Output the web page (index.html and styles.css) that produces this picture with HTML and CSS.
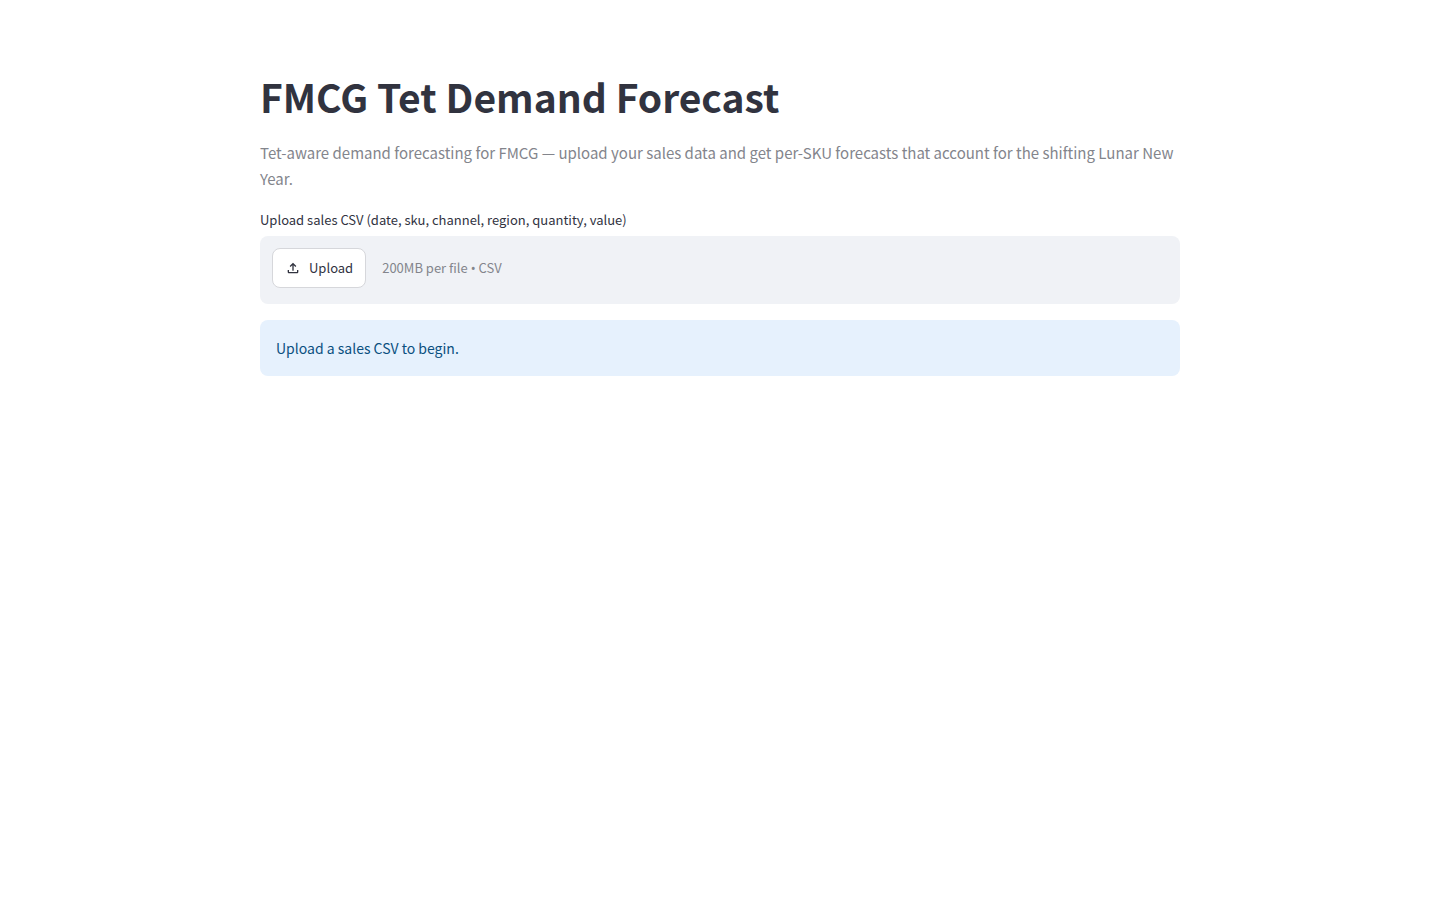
FILE: index.html
```html
<!DOCTYPE html>
<html lang="en">
<head>
  <meta charset="UTF-8">
  <meta name="viewport" content="width=device-width, initial-scale=1.0">
  <title>FMCG Tet Demand Forecast</title>
  <link rel="stylesheet" href="styles.css">
</head>
<body>
  <main class="container">
    <h1>FMCG Tet Demand Forecast</h1>
    <p class="caption">Tet-aware demand forecasting for FMCG — upload your sales data and get per-SKU forecasts that account for the shifting Lunar New Year.</p>
    <!-- File uploader -->
    <div class="uploader">
      <label class="uploader-label" for="salesFile">Upload sales CSV (date, sku, channel, region, quantity, value)</label>
      <div class="dropzone">
        <input type="file" id="salesFile" accept=".csv" hidden>
        <button type="button" class="upload-btn" id="uploadBtn">
          <svg class="icon" viewBox="0 0 24 24" aria-hidden="true">
            <path d="M18 15v3H6v-3H4v3c0 1.100.9 2 2 2h12c1.100 0 2-.9 2-2v-3h-2zM7 9l1.410 1.410L11 7.830V16h2V7.830l2.590 2.580L17 9l-5-5-5 5z"/>
          </svg>
          Upload
        </button>
        <span class="hint">200MB per file <span class="dot">•</span> CSV</span>
      </div>
    </div>
    <div class="alert" role="alert">Upload a sales CSV to begin.</div>
  </main>
  <script>
    document.getElementById('uploadBtn').addEventListener('click', () => {
      document.getElementById('salesFile').click();
    });
  </script>
</body>
</html>
```
FILE: styles.css
```css
:root {
  --text: #31333f;
  --muted: #83858c;
  --panel: #f0f2f6;
  --border: #d6d7db;
  --info-bg: #e6f1fd;
  --info-text: #0a5080;
  --radius: 8px;
}
*, *::before, *::after { box-sizing: border-box; }
body {
  margin: 0;
  background: #ffffff;
  color: var(--text);
  font-family: "Source Sans Pro", "Noto Sans CJK SC", sans-serif;
  font-size: 14px;
  line-height: 24px;
}
.container {
  max-width: 952px;
  margin: 0 auto;
  padding: 72px 16px 160px;
}
h1 {
  margin: 0;
  font-size: 39px;
  font-weight: 700;
  line-height: 48px;
}
.caption {
  margin: 20px 0 16px;
  color: var(--muted);
  font-size: 15px;
  line-height: 26px;
}
.uploader { margin-bottom: 16px; }
.uploader-label {
  display: block;
  margin-bottom: 4px;
  font-size: 13px;
}
.dropzone {
  display: flex;
  align-items: flex-start;
  gap: 16px;
  padding: 12px 12px 16px;
  background: var(--panel);
  border-radius: var(--radius);
}
.upload-btn {
  display: flex;
  align-items: center;
  gap: 8px;
  height: 40px;
  padding: 0 12px;
  background: #ffffff;
  border: 1px solid var(--border);
  border-radius: var(--radius);
  color: inherit;
  font: inherit;
  font-size: 13px;
  cursor: pointer;
}
.upload-btn:hover { border-color: #ff4b4b; color: #ff4b4b; }
.icon {
  width: 16px;
  height: 16px;
  fill: currentColor;
}
.hint {
  color: var(--muted);
  font-size: 13px;
  line-height: 40px;
}
.dot { font-family: "Noto Sans", sans-serif; }
.alert {
  padding: 16px;
  background: var(--info-bg);
  border-radius: var(--radius);
  color: var(--info-text);
}
```
